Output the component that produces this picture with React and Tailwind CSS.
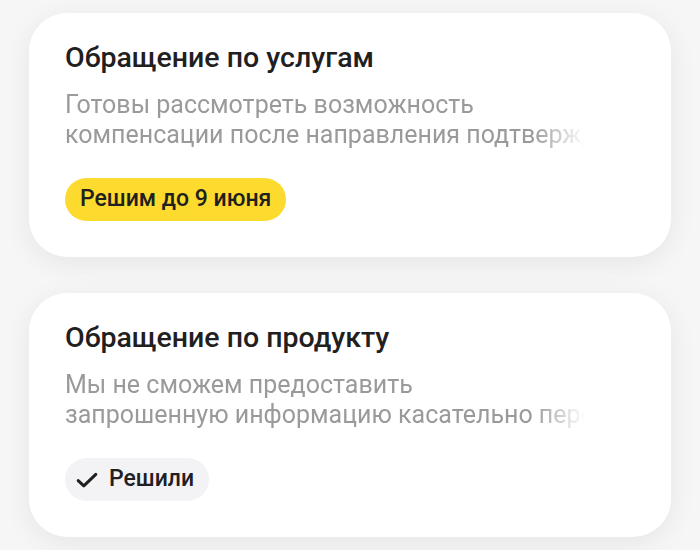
import React from 'react';

const tickets = [
  {
    id: 1,
    title: 'Обращение по услугам',
    lines: ['Готовы рассмотреть возможность', 'компенсации после направления подтверждающих документов'],
    status: 'pending',
    label: 'Решим до 9 июня',
  },
  {
    id: 2,
    title: 'Обращение по продукту',
    lines: ['Мы не сможем предоставить', 'запрошенную информацию касательно персональных данных'],
    status: 'done',
    label: 'Решили',
  },
];

const CheckIcon = () => (
  <svg width="22" height="22" viewBox="0 0 22 22" fill="none">
    <path d="M2.2 11.6l5.6 5.3L19.8 5.4" stroke="#21201f" strokeWidth="3" strokeLinecap="round" strokeLinejoin="round" />
  </svg>
);

const App = () => {
  return (
    <div className="w-[700px] h-[550px] bg-[#f6f6f6] pt-[13px] px-[29px] flex flex-col gap-[36px] font-['Roboto',sans-serif] overflow-hidden">
      {tickets.map((t) => (
        <div
          key={t.id}
          className="bg-white rounded-[38px] h-[244px] pt-[28px] px-[36px] pb-[36px] shadow-[0_6px_28px_rgba(0,0,0,0.07)]"
        >
          <h2 className="text-[28.5px] leading-[34px] font-medium text-[#21201f]">
            {t.title}
          </h2>

          {/* Description, second line fades out */}
          <div className="mt-[15px] w-[520px] text-[25px] leading-[30px] text-[#9a9a9a] overflow-hidden [mask-image:linear-gradient(to_right,black_90%,transparent)]">
            <div className="whitespace-nowrap">{t.lines[0]}</div>
            <div className="whitespace-nowrap">{t.lines[1]}</div>
          </div>

          <div className="mt-[28px] flex">
            {t.status === 'pending' ? (
              <span className="h-[43px] px-[15px] rounded-full bg-[#fcdb2e] text-[23px] font-medium text-[#21201f] flex items-center">
                {t.label}
              </span>
            ) : (
              <span className="h-[43px] pl-[11px] pr-[15px] rounded-full bg-[#f3f3f5] text-[23px] font-medium text-[#21201f] flex items-center gap-[11px]">
                <CheckIcon />
                {t.label}
              </span>
            )}
          </div>
        </div>
      ))}
    </div>
  );
};

export default App;
